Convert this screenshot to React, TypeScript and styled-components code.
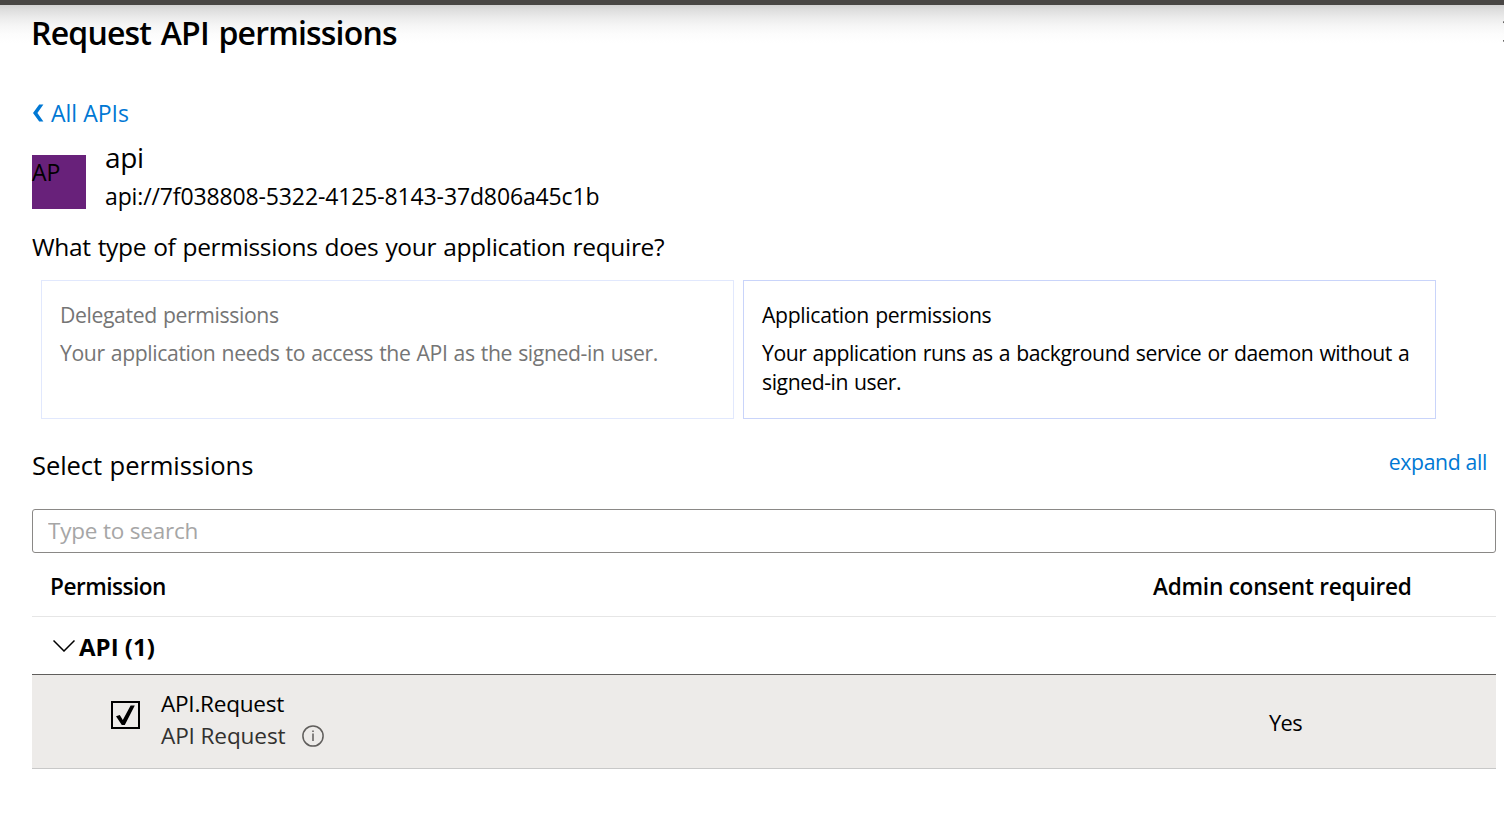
import React from 'react';
import styled, { createGlobalStyle } from 'styled-components';

const GlobalStyle = createGlobalStyle`
  *, *::before, *::after { box-sizing: border-box; }
  body {
    margin: 0;
    background: #fff;
    color: #000;
    font-family: "Open Sans", "Noto Sans", sans-serif;
    overflow: hidden;
  }
`;

const Panel = styled.main`
  display: flex;
  flex-direction: column;
  height: 822px;
  border-top: 5px solid #484644;
  background: linear-gradient(
    to bottom,
    #d2d2d2 0,
    #dedede 5px,
    #ececec 13px,
    #f6f6f6 21px,
    #fcfcfc 29px,
    #fff 38px
  );
  overflow: hidden;
`;

const Header = styled.header`
  display: flex;
  justify-content: space-between;
  align-items: flex-start;
  width: 1524px;
  height: 93px;
  padding: 8px 0 0 31px;
`;

const Title = styled.h1`
  margin: 0;
  font-size: 32px;
  line-height: 40px;
  font-weight: 600;
  letter-spacing: -0.8px;
  word-spacing: 2px;
`;

const CloseButton = styled.button`
  display: block;
  margin: 8px 0 0;
  padding: 0;
  border: 0;
  background: none;
  line-height: 0;
`;

const Content = styled.div`
  display: flex;
  flex-direction: column;
  padding: 0 8px 0 32px;
`;

const BackLink = styled.a`
  display: flex;
  align-items: center;
  gap: 7px;
  height: 30px;
  color: #0078d4;
  font-size: 23px;
  line-height: 30px;
`;

const ApiSummary = styled.section`
  display: flex;
  gap: 19px;
  height: 91px;
  padding-top: 10px;
`;

const Avatar = styled.div`
  width: 54px;
  height: 54px;
  margin-top: 17px;
  padding-top: 2px;
  background: #68217a;
  font-size: 23px;
  line-height: 30px;
`;

const ApiName = styled.div`
  font-size: 28px;
  line-height: 38px;
  letter-spacing: -0.4px;
`;

const ApiUri = styled.div`
  margin-top: 5px;
  font-size: 23px;
  line-height: 30px;
  letter-spacing: -0.13px;
`;

const Question = styled.p`
  margin: 0;
  height: 51px;
  padding-top: 10px;
  font-size: 24.5px;
  line-height: 35px;
  letter-spacing: -0.33px;
  word-spacing: 1px;
`;

const CardGroup = styled.div`
  display: grid;
  grid-template-columns: 693px 693px;
  gap: 9px;
  margin: 10px 0 0 9px;
`;

const Card = styled.div<{ $disabled?: boolean }>`
  height: 139px;
  padding: 19px 18px;
  border: 1px solid ${(p) => (p.$disabled ? '#e1e8fd' : '#c9d4fa')};
  background: #fff;
  color: ${(p) => (p.$disabled ? '#757575' : '#000')};
  font-size: 21.2px;
  line-height: 29px;
  letter-spacing: ${(p) => (p.$disabled ? '-0.39px' : '-0.44px')};
  word-spacing: 1px;
`;

const CardTitle = styled.div<{ $tracking: number }>`
  letter-spacing: ${(p) => p.$tracking}px;
`;

const CardText = styled.div`
  margin-top: 9px;
`;

const SectionBar = styled.div`
  display: flex;
  justify-content: space-between;
  align-items: flex-start;
  height: 63px;
  margin-top: 27px;
  padding-right: 9px;
`;

const SectionTitle = styled.h2`
  margin: 2px 0 0;
  font-size: 25.6px;
  line-height: 36px;
  font-weight: 400;
  letter-spacing: -0.1px;
  word-spacing: 1px;
`;

const ExpandLink = styled.a`
  padding-top: 1px;
  color: #0078d4;
  font-size: 21.2px;
  line-height: 29px;
  letter-spacing: -0.34px;
`;

const SearchInput = styled.input`
  width: 100%;
  height: 44px;
  padding: 0 15px 1px;
  border: 1px solid #8a8886;
  border-radius: 3px;
  background: #fff;
  font-family: inherit;
  font-size: 22.5px;
  letter-spacing: -0.2px;
  outline: none;
  &::placeholder { color: #a6a6a6; opacity: 1; }
`;

const columns = 'grid-template-columns: 1121px 1fr;';

const TableHead = styled.div`
  display: grid;
  ${columns}
  height: 64px;
  padding-top: 18px;
  border-bottom: 1px solid #e6e6e6;
  font-size: 22.6px;
  line-height: 32px;
  font-weight: 600;
`;

const HeadCell = styled.div<{ $inset?: number; $tracking: number }>`
  padding-left: ${(p) => p.$inset ?? 0}px;
  letter-spacing: ${(p) => p.$tracking}px;
`;

const GroupRow = styled.div`
  display: flex;
  align-items: center;
  gap: 4px;
  height: 58px;
  padding: 2px 0 0 21px;
  border-bottom: 1px solid #605e5c;
  font-size: 24px;
  line-height: 32px;
  font-weight: 700;
`;

const GroupChevron = styled.svg`
  margin-bottom: 2px;
`;

const PermissionRow = styled.div`
  display: grid;
  ${columns}
  height: 94px;
  background: #edebe9;
  border-bottom: 1px solid #c8c8c8;
`;

const PermissionCell = styled.div`
  display: flex;
  gap: 21px;
  padding: 13px 0 0 79px;
`;

const Checkbox = styled.span`
  display: flex;
  width: 29px;
  height: 29px;
  margin-top: 13px;
`;

const PermissionName = styled.div`
  font-size: 22.6px;
  line-height: 32px;
  letter-spacing: -0.27px;
`;

const PermissionHint = styled.div`
  display: flex;
  align-items: center;
  gap: 17px;
  color: #323130;
  font-size: 22.6px;
  line-height: 32px;
  letter-spacing: -0.13px;
`;

const ConsentCell = styled.div`
  padding: 32px 0 0 116px;
  font-size: 21.8px;
  line-height: 32px;
  letter-spacing: -0.6px;
`;

export default function App() {
  return (
    <>
      <GlobalStyle />
      <Panel>
        <Header>
          <Title>Request API permissions</Title>
          <CloseButton aria-label="Close">
            <svg width="21" height="21" viewBox="0 0 21 21" fill="none" stroke="#323130" strokeWidth="1.8">
              <path d="M.5.5l20 20M20.5.5l-20 20" />
            </svg>
          </CloseButton>
        </Header>
        <Content>
          <BackLink>
            <svg width="12" height="18" viewBox="0 0 12 18" fill="#0078d4">
              <path d="M7.2 0.5H11.4L5.4 9L11.4 17.5H7.2L1 9Z" />
            </svg>
            All APIs
          </BackLink>
          <ApiSummary>
            <Avatar>AP</Avatar>
            <div>
              <ApiName>api</ApiName>
              <ApiUri>api://7f038808-5322-4125-8143-37d806a45c1b</ApiUri>
            </div>
          </ApiSummary>
          <Question>What type of permissions does your application require?</Question>
          <CardGroup>
            <Card $disabled>
              <CardTitle $tracking={-0.38}>Delegated permissions</CardTitle>
              <CardText>Your application needs to access the API as the signed-in user.</CardText>
            </Card>
            <Card>
              <CardTitle $tracking={-0.33}>Application permissions</CardTitle>
              <CardText>Your application runs as a background service or daemon without a signed-in user.</CardText>
            </Card>
          </CardGroup>
          <SectionBar>
            <SectionTitle>Select permissions</SectionTitle>
            <ExpandLink>expand all</ExpandLink>
          </SectionBar>
          <SearchInput placeholder="Type to search" />
          <TableHead>
            <HeadCell $inset={18} $tracking={-0.5}>Permission</HeadCell>
            <HeadCell $tracking={-0.24}>Admin consent required</HeadCell>
          </TableHead>
          <GroupRow>
            <GroupChevron width="22" height="12" viewBox="0 0 22 12" fill="none" stroke="#000" strokeWidth="1.5">
              <path d="M.5.5L11 11L21.5.5" />
            </GroupChevron>
            API (1)
          </GroupRow>
          <PermissionRow>
            <PermissionCell>
              <Checkbox role="checkbox" aria-checked="true">
                <svg width="29" height="29" viewBox="0 0 29 29" fill="none">
                  <rect x="1" y="1" width="27" height="26" stroke="#000" strokeWidth="2" />
                  <path d="M5 15.2L8.8 14L11.8 19L19.6 4.5H23.8L13.8 24H10.8Z" fill="#000" />
                </svg>
              </Checkbox>
              <div>
                <PermissionName>API.Request</PermissionName>
                <PermissionHint>
                  API Request
                  <svg width="22" height="22" viewBox="0 0 22 22" fill="none" stroke="#605e5c" strokeWidth="1.5">
                    <circle cx="11" cy="11" r="10.1" />
                    <path d="M11 8.5V16M11 5.4V7" />
                  </svg>
                </PermissionHint>
              </div>
            </PermissionCell>
            <ConsentCell>Yes</ConsentCell>
          </PermissionRow>
        </Content>
      </Panel>
    </>
  );
}
